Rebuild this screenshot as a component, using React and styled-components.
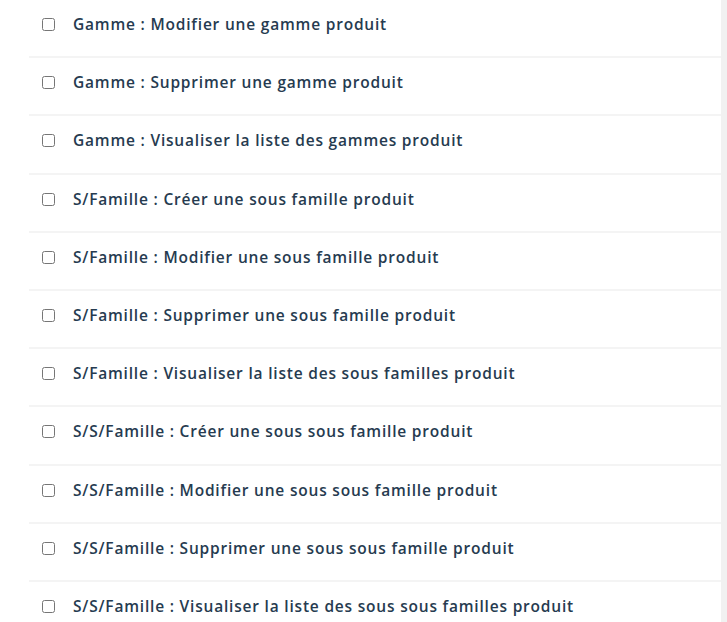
import React from "react";
import styled, { createGlobalStyle } from "styled-components";

const permissions = [
  "Gamme : Modifier une gamme produit",
  "Gamme : Supprimer une gamme produit",
  "Gamme : Visualiser la liste des gammes produit",
  "S/Famille : Créer une sous famille produit",
  "S/Famille : Modifier une sous famille produit",
  "S/Famille : Supprimer une sous famille produit",
  "S/Famille : Visualiser la liste des sous familles produit",
  "S/S/Famille : Créer une sous sous famille produit",
  "S/S/Famille : Modifier une sous sous famille produit",
  "S/S/Famille : Supprimer une sous sous famille produit",
  "S/S/Famille : Visualiser la liste des sous sous familles produit",
];

const GlobalStyle = createGlobalStyle`
  html, body {
    margin: 0;
    padding: 0;
    background: #ffffff;
    overflow: hidden;
  }
  body {
    font-family: "Open Sans", "Noto Sans", sans-serif;
  }
`;

const Page = styled.div`
  display: flex;
  height: 622px;
  overflow: hidden;
`;

const List = styled.ul`
  flex: 1;
  margin: 0 0 0 29px;
  padding: 0;
  list-style: none;
`;

const Row = styled.li`
  box-sizing: border-box;
  height: 58.2px;
  display: flex;
  align-items: flex-start;
  padding: 14px 0 0 13px;
  border-bottom: 2px solid #f4f4f4;
`;

const Check = styled.input.attrs({ type: "checkbox" })`
  width: 13px;
  height: 13px;
  margin: 4px 18px 0 0;
  flex-shrink: 0;
`;

const Label = styled.label`
  font-size: 15.5px;
  line-height: 20px;
  font-weight: 600;
  letter-spacing: 0.8px;
  color: #263b50;
`;

const Scrollbar = styled.div`
  width: 6px;
  background: #f1f1f1;
`;

export default function App() {
  return (
    <>
      <GlobalStyle />
      <Page>
        <List>
          {permissions.map((p) => (
            <Row key={p}>
              <Check />
              <Label>{p}</Label>
            </Row>
          ))}
        </List>
        <Scrollbar />
      </Page>
    </>
  );
}
